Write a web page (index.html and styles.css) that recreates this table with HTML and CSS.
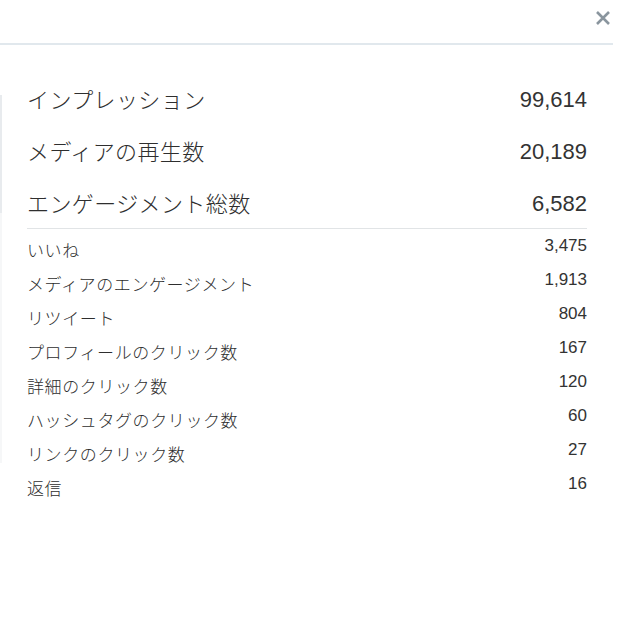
FILE: index.html
```html
<!DOCTYPE html>
<html lang="ja">
<head>
<meta charset="utf-8">
<link rel="stylesheet" href="styles.css">
</head>
<body>
<div class="dialog">
  <div class="header">
    <button class="close" aria-label="閉じる">
      <svg width="16" height="14" viewBox="0 0 16 14"><path d="M2 1 L14 13 M14 1 L2 13" stroke="#8a959e" stroke-width="2.6" stroke-linecap="butt" fill="none"/></svg>
    </button>
  </div>
  <div class="content">
    <div class="major">
      <div class="row big"><span class="label">インプレッション</span><span class="num">99,614</span></div>
      <div class="row big"><span class="label">メディアの再生数</span><span class="num">20,189</span></div>
      <div class="row big"><span class="label">エンゲージメント総数</span><span class="num">6,582</span></div>
    </div>
    <div class="minor">
      <div class="row small"><span class="label">いいね</span><span class="num">3,475</span></div>
      <div class="row small"><span class="label">メディアのエンゲージメント</span><span class="num">1,913</span></div>
      <div class="row small"><span class="label">リツイート</span><span class="num">804</span></div>
      <div class="row small"><span class="label">プロフィールのクリック数</span><span class="num">167</span></div>
      <div class="row small"><span class="label">詳細のクリック数</span><span class="num">120</span></div>
      <div class="row small"><span class="label">ハッシュタグのクリック数</span><span class="num">60</span></div>
      <div class="row small"><span class="label">リンクのクリック数</span><span class="num">27</span></div>
      <div class="row small"><span class="label">返信</span><span class="num">16</span></div>
    </div>
  </div>
</div>
</body>
</html>
```
FILE: styles.css
```css
* { box-sizing: border-box; }
html, body { margin: 0; padding: 0; background: #fff; }
body {
  width: 640px;
  height: 621px;
  overflow: hidden;
  color: #333;
  font-family: "Liberation Sans", "Noto Sans CJK JP", sans-serif;
}
.dialog { position: relative; }
.header {
  width: 613px;
  height: 45px;
  border-bottom: 2px solid #e1e8ed;
  position: relative;
}
.close {
  position: absolute;
  left: 595px;
  top: 11px;
  width: 16px;
  height: 14px;
  padding: 0;
  border: 0;
  background: none;
  display: block;
}
.close svg { display: block; }
.content {
  position: relative;
  padding: 27px 53px 0 27px;
}
.content::before {
  content: "";
  position: absolute;
  left: 0;
  top: 50px;
  width: 2px;
  height: 118px;
  background: #e8ebee;
}
.content::after {
  content: "";
  position: absolute;
  left: 0;
  top: 168px;
  width: 2px;
  height: 250px;
  background: #f6f7f8;
}
.row {
  display: flex;
  justify-content: space-between;
}
.label {
  font-family: "Noto Sans CJK JP", "Liberation Sans", sans-serif;
  font-weight: 300;
  color: #2e2e2e;
}
.major { border-bottom: 1px solid #e1e4e6; }
.big {
  height: 52px;
  padding-top: 4px;
  align-items: flex-start;
}
.big .label { font-size: 22px; line-height: 44px; letter-spacing: 0.4px; }
.big .num { font-size: 22px; line-height: 48px; }
.minor { padding-top: 4px; }
.small {
  height: 34px;
  align-items: flex-start;
}
.small .label { font-size: 17px; line-height: 33px; letter-spacing: 0.6px; }
.small .num { font-size: 17px; line-height: 26px; }
```
